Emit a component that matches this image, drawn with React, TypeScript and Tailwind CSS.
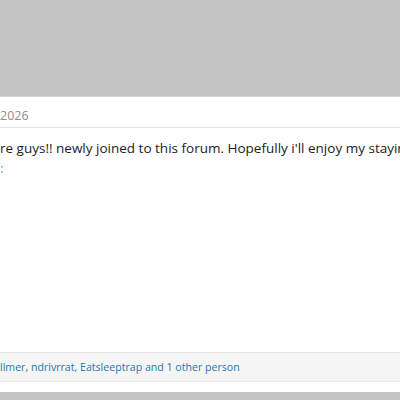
import React from "react";

export default function App() {
  return (
    <div className="w-[400px] h-[400px] bg-[#c4c4c4] overflow-hidden flex flex-col" style={{ fontFamily: '"Open Sans", "Noto Sans", sans-serif' }}>
      <div className="h-[96px] shrink-0" />
      <div className="bg-white border-t border-[#d8d8d8] flex flex-col h-[296px] shrink-0">
        <div className="h-[31px] border-b border-[#e5e5e5] flex items-center text-[12.5px] text-[#8c8c8c] shrink-0">
          <span className="pt-[8px]">2026</span>
        </div>
        <div className="flex-1 pt-[10px] text-[13.5px] leading-[20px] text-[#1d1d1d] whitespace-nowrap">
          <div>re guys!! newly joined to this forum. Hopefully i'll enjoy my staying here.</div>
          <div className="text-[#47a7eb]">:</div>
        </div>
        <div className="h-[30px] bg-[#f5f5f5] border-y border-[#e5e5e5] flex items-center text-[10.6px] text-[#2577b1] whitespace-nowrap shrink-0">
          <span className="pt-[1px]">llmer, ndrivrrat, Eatsleeptrap and 1 other person</span>
        </div>
        <div className="h-[10px] shrink-0" />
      </div>
    </div>
  );
}
